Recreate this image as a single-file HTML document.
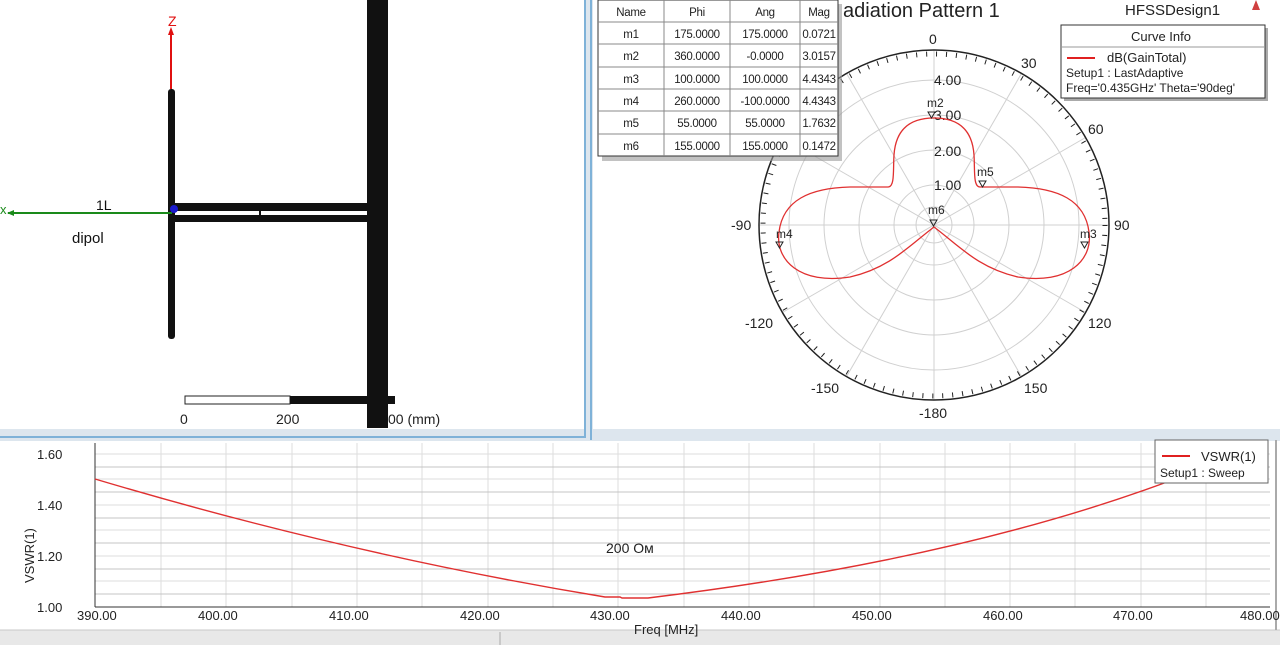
<!DOCTYPE html>
<html><head><meta charset="utf-8"><style>
html,body{margin:0;padding:0;width:1280px;height:645px;overflow:hidden;background:#fff;font-family:"Liberation Sans",sans-serif}
svg text{font-family:"Liberation Sans",sans-serif}
</style></head><body>
<svg width="1280" height="645" viewBox="0 0 1280 645" xmlns="http://www.w3.org/2000/svg">
<rect width="1280" height="645" fill="#fff"/>
<rect x="0" y="429" width="1280" height="12" fill="#dde6ee"/>
<rect x="584" y="0" width="9" height="440" fill="#dde6ee"/>
<rect x="584" y="0" width="2" height="438" fill="#7fb2d8"/>
<rect x="0" y="436" width="586" height="2" fill="#7fb2d8"/>
<rect x="590" y="0" width="2" height="440" fill="#7fb2d8"/>
<rect x="0" y="630" width="1280" height="15" fill="#e8e8e8"/>
<line x1="0" y1="630" x2="1280" y2="630" stroke="#c8c8c8"/>
<line x1="1276" y1="440" x2="1276" y2="630" stroke="#aaa" stroke-width="2"/>
<line x1="500" y1="632" x2="500" y2="645" stroke="#aaa"/>

<rect x="367" y="0" width="21" height="428" fill="#111"/>
<rect x="172" y="203" width="195" height="8" fill="#111"/>
<rect x="172" y="215" width="195" height="7" fill="#111"/>
<line x1="260" y1="210" x2="260" y2="216" stroke="#111" stroke-width="2"/>
<rect x="168" y="89" width="7" height="250" rx="3" fill="#111"/>
<line x1="171" y1="89" x2="171" y2="30" stroke="#e01010" stroke-width="2"/>
<path d="M168,35 L171,27 L174,35Z" fill="#e01010"/>
<text x="168" y="26" font-size="14" fill="#e01010">Z</text>
<line x1="8" y1="213" x2="172" y2="213" stroke="#1a8a1a" stroke-width="2"/>
<path d="M14,210 L7,213 L14,216Z" fill="#1a8a1a"/>
<text x="0" y="214" font-size="13" fill="#1a8a1a">x</text>
<circle cx="174" cy="209" r="4" fill="#1a1acc"/>
<text x="96" y="210" font-size="14" fill="#111">1L</text>
<text x="72" y="243" font-size="15" fill="#111">dipol</text>
<rect x="185" y="396" width="105" height="8" fill="#fff" stroke="#222"/>
<rect x="290" y="396" width="105" height="8" fill="#111"/>
<rect x="367" y="396" width="21" height="32" fill="#111"/>
<text x="180" y="424" font-size="14" fill="#222">0</text>
<text x="276" y="424" font-size="14" fill="#222">200</text>
<text x="388" y="424" font-size="14" fill="#222">00 (mm)</text>

<g fill="none" stroke="#d0d0d0" stroke-width="1">
<circle cx="934" cy="225" r="40"/><circle cx="934" cy="225" r="75"/><circle cx="934" cy="225" r="110"/><circle cx="934" cy="225" r="145"/>
<circle cx="934" cy="225" r="18"/>
<line x1="934" y1="50" x2="934" y2="400"/><line x1="759" y1="225" x2="1109" y2="225"/>
<line x1="846.5" y1="73.4" x2="1021.5" y2="376.6"/><line x1="1021.5" y1="73.4" x2="846.5" y2="376.6"/>
<line x1="782.4" y1="137.5" x2="1085.6" y2="312.5"/><line x1="1085.6" y1="137.5" x2="782.4" y2="312.5"/>
</g>
<circle cx="934" cy="225" r="175" fill="none" stroke="#222" stroke-width="1.5"/>
<circle cx="934" cy="225" r="171" fill="none" stroke="#222" stroke-width="5" stroke-dasharray="1 8.97"/>
<g font-size="14" fill="#222">
<text x="929" y="44">0</text><text x="1021" y="68">30</text><text x="1088" y="134">60</text>
<text x="1114" y="230">90</text><text x="1088" y="328">120</text><text x="1024" y="393">150</text>
<text x="919" y="418">-180</text><text x="811" y="393">-150</text><text x="745" y="328">-120</text>
<text x="731" y="230">-90</text>
<text x="934" y="85">4.00</text><text x="934" y="120">3.00</text><text x="934" y="156">2.00</text><text x="934" y="190">1.00</text>
</g>
<path d="M934,227 C910,245 890,268 850,277 C800,285 775,260 779,232 C783,200 810,188 850,187 L888,187 C895,187 893,170 894,155 C896,125 915,118 934,118 C953,118 972,125 974,155 C975,170 973,187 980,187 L1018,187 C1058,188 1085,200 1089,232 C1093,260 1068,285 1018,277 C978,268 958,245 934,227Z" fill="none" stroke="#e03030" stroke-width="1.3"/>
<g font-size="12" fill="#222">
<text x="927" y="107">m2</text><path d="M928,112 h7 l-3.5,6z" fill="none" stroke="#222"/>
<text x="977" y="176">m5</text><path d="M979,181 h7 l-3.5,6z" fill="none" stroke="#222"/>
<text x="1080" y="238">m3</text><path d="M1081,242 h7 l-3.5,6z" fill="none" stroke="#222"/>
<text x="776" y="238">m4</text><path d="M776,242 h7 l-3.5,6z" fill="none" stroke="#222"/>
<text x="928" y="214">m6</text><path d="M930,220 h7 l-3.5,6z" fill="none" stroke="#222"/>
</g>
<text x="843" y="17" font-size="20" fill="#222">adiation Pattern 1</text>
<text x="1125" y="15" font-size="15" fill="#222">HFSSDesign1</text>
<path d="M1252,10 L1256,0 L1260,10Z" fill="#d04040"/>
<rect x="1064" y="28" width="204" height="73" fill="#aaa"/>
<rect x="1061" y="25" width="204" height="73" fill="#fff" stroke="#333"/>
<line x1="1061" y1="47" x2="1265" y2="47" stroke="#999"/>
<text x="1131" y="41" font-size="13" fill="#222">Curve Info</text>
<line x1="1067" y1="58" x2="1095" y2="58" stroke="#e02020" stroke-width="2"/>
<text x="1107" y="62" font-size="13" fill="#222">dB(GainTotal)</text>
<text x="1066" y="77" font-size="12" fill="#222">Setup1 : LastAdaptive</text>
<text x="1066" y="92" font-size="12" fill="#222">Freq='0.435GHz' Theta='90deg'</text>
<rect x="602" y="4" width="240" height="157" fill="#999" opacity="0.6"/>
<rect x="598" y="0" width="240" height="156" fill="#fff" stroke="#333"/>
<g stroke="#888"><line x1="664" y1="0" x2="664" y2="156"/><line x1="730" y1="0" x2="730" y2="156"/><line x1="800" y1="0" x2="800" y2="156"/>
<line x1="598" y1="22" x2="838" y2="22"/><line x1="598" y1="44" x2="838" y2="44"/><line x1="598" y1="67" x2="838" y2="67"/><line x1="598" y1="89" x2="838" y2="89"/><line x1="598" y1="111" x2="838" y2="111"/><line x1="598" y1="134" x2="838" y2="134"/></g>
<g font-size="11.5" fill="#222" text-anchor="middle" letter-spacing="-0.3">
<text x="631" y="16">Name</text><text x="697" y="16">Phi</text><text x="765" y="16">Ang</text><text x="819" y="16">Mag</text>
<text x="631" y="38">m1</text><text x="697" y="38">175.0000</text><text x="765" y="38">175.0000</text><text x="819" y="38">0.0721</text>
<text x="631" y="60">m2</text><text x="697" y="60">360.0000</text><text x="765" y="60">-0.0000</text><text x="819" y="60">3.0157</text>
<text x="631" y="83">m3</text><text x="697" y="83">100.0000</text><text x="765" y="83">100.0000</text><text x="819" y="83">4.4343</text>
<text x="631" y="105">m4</text><text x="697" y="105">260.0000</text><text x="765" y="105">-100.0000</text><text x="819" y="105">4.4343</text>
<text x="631" y="127">m5</text><text x="697" y="127">55.0000</text><text x="765" y="127">55.0000</text><text x="819" y="127">1.7632</text>
<text x="631" y="150">m6</text><text x="697" y="150">155.0000</text><text x="765" y="150">155.0000</text><text x="819" y="150">0.1472</text>
</g>

<g stroke="#ddd" stroke-width="1">
<line x1="95" y1="454" x2="1270" y2="454"/><line x1="95" y1="479" x2="1270" y2="479"/><line x1="95" y1="505" x2="1270" y2="505"/><line x1="95" y1="530" x2="1270" y2="530"/><line x1="95" y1="556" x2="1270" y2="556"/><line x1="95" y1="581" x2="1270" y2="581"/>
<line x1="161" y1="443" x2="161" y2="607"/><line x1="226" y1="443" x2="226" y2="607"/><line x1="292" y1="443" x2="292" y2="607"/><line x1="357" y1="443" x2="357" y2="607"/><line x1="422" y1="443" x2="422" y2="607"/><line x1="488" y1="443" x2="488" y2="607"/><line x1="553" y1="443" x2="553" y2="607"/><line x1="618" y1="443" x2="618" y2="607"/><line x1="684" y1="443" x2="684" y2="607"/><line x1="749" y1="443" x2="749" y2="607"/><line x1="814" y1="443" x2="814" y2="607"/><line x1="880" y1="443" x2="880" y2="607"/><line x1="945" y1="443" x2="945" y2="607"/><line x1="1010" y1="443" x2="1010" y2="607"/><line x1="1075" y1="443" x2="1075" y2="607"/><line x1="1141" y1="443" x2="1141" y2="607"/><line x1="1206" y1="443" x2="1206" y2="607"/>
</g>
<g stroke="#c4c4c4"><line x1="95" y1="467" x2="1270" y2="467"/><line x1="95" y1="492" x2="1270" y2="492"/><line x1="95" y1="518" x2="1270" y2="518"/><line x1="95" y1="543" x2="1270" y2="543"/><line x1="95" y1="569" x2="1270" y2="569"/><line x1="95" y1="594" x2="1270" y2="594"/></g>
<line x1="95" y1="443" x2="95" y2="607" stroke="#333"/>
<line x1="95" y1="607" x2="1270" y2="607" stroke="#333"/>
<g font-size="13" fill="#222">
<text x="37" y="459">1.60</text><text x="37" y="510">1.40</text><text x="37" y="561">1.20</text><text x="37" y="612">1.00</text>
<text x="77" y="620">390.00</text><text x="198" y="620">400.00</text><text x="329" y="620">410.00</text><text x="460" y="620">420.00</text><text x="590" y="620">430.00</text><text x="721" y="620">440.00</text><text x="852" y="620">450.00</text><text x="983" y="620">460.00</text><text x="1113" y="620">470.00</text><text x="1240" y="620">480.00</text>
<text x="634" y="634">Freq [MHz]</text>
<text x="34" y="583" transform="rotate(-90 34 583)">VSWR(1)</text>
<text x="606" y="553" font-size="14">200 Ом</text>
</g>
<path d="M95,479 Q350,555 605,597 L620,597 L622,598 L648,598 Q960,560 1175,479" fill="none" stroke="#e03030" stroke-width="1.4"/>
<rect x="1155" y="440" width="113" height="43" fill="#fff" stroke="#666"/>
<line x1="1162" y1="456" x2="1190" y2="456" stroke="#e02020" stroke-width="2"/>
<text x="1201" y="461" font-size="13" fill="#222">VSWR(1)</text>
<text x="1160" y="477" font-size="12" fill="#222">Setup1 : Sweep</text>
</svg>
</body></html>
